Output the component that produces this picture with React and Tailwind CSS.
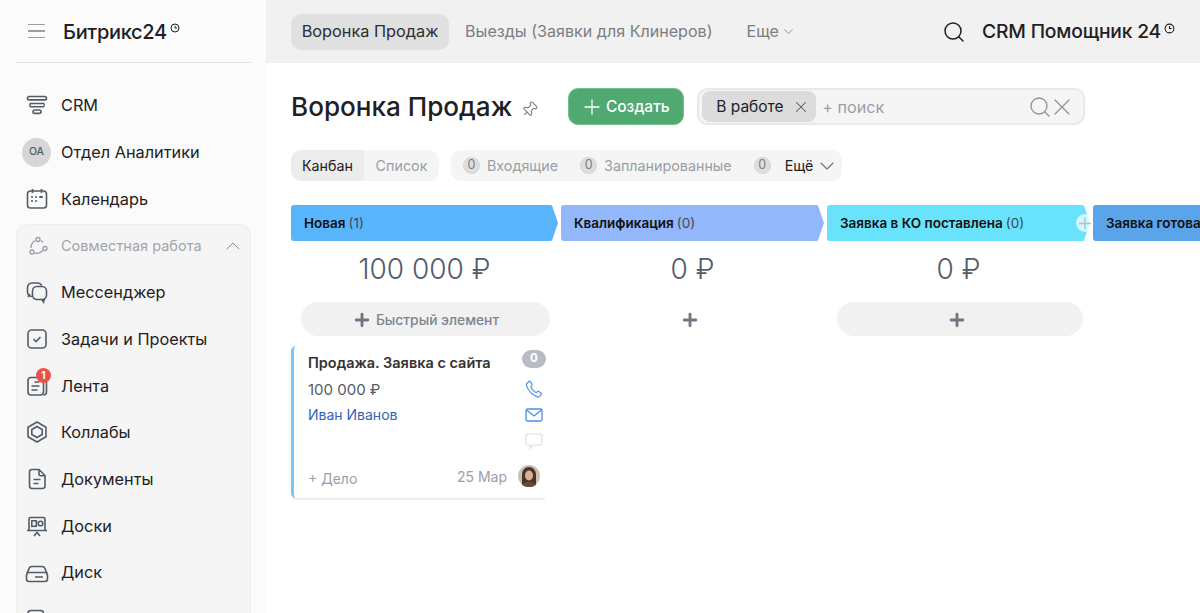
import React from "react";
import { ChevronDown, ChevronUp, Plus, Search, X, Pin } from "lucide-react";

const Clock = ({ className }) => (
  <svg viewBox="0 0 10 10" fill="none" stroke="currentColor" strokeWidth="1" className={className}>
    <circle cx="5" cy="5" r="4" />
    <path d="M5 2.8V5h2" />
  </svg>
);

const icon = "w-6 h-6 text-[#525c69] shrink-0";
const svgProps = { viewBox: "0 0 24 24", fill: "none", stroke: "currentColor", strokeWidth: 1.6, className: icon };

const FunnelIcon = () => (
  <svg {...svgProps}>
    <rect x="2.5" y="3.5" width="19" height="3.4" rx="1.7" />
    <path d="M5.5 10.5h13c.8 0 .8 3.2 0 3.2h-13c-.8 0-.8-3.2 0-3.2z" />
    <rect x="8" y="17" width="8" height="3.4" rx="1.7" />
  </svg>
);
const CalendarIcon = () => (
  <svg {...svgProps}>
    <rect x="2.5" y="4" width="19" height="17" rx="3" />
    <path d="M7.5 2v4M16.5 2v4" />
    <path d="M7 10h.01M11 10h.01M15 10h2M7 14h.01M11 14h.01" strokeWidth="2" strokeLinecap="round" />
  </svg>
);
const CollabIcon = () => (
  <svg viewBox="0 0 24 24" fill="none" stroke="#9a9ea5" strokeWidth="1.3" className="w-6 h-6 shrink-0">
    <circle cx="12" cy="5.5" r="2" />
    <circle cx="6" cy="18" r="2" />
    <circle cx="19" cy="14.5" r="2" />
    <path d="M9 6.500c-2.500 1.500-4 4-4 7.500M8.500 19c3 .8 6 0 8.500-2.500M15 6.500c.8.500 1.500 1.200 2 2" />
  </svg>
);
const ChatIcon = () => (
  <svg {...svgProps}>
    <path d="M7 16.500c-2.800 0-4.500-1.800-4.500-4.500V8c0-3 2-5 5-5h5c2 0 3.500 1 4.200 2.500" />
    <path d="M5 14l-2 3" />
    <rect x="7.500" y="6.500" width="14" height="13" rx="4.500" />
    <path d="M17 19.500l1.500 2.500 1-3" />
  </svg>
);
const TaskIcon = () => (
  <svg {...svgProps}>
    <rect x="3" y="3" width="18" height="18" rx="3.500" />
    <path d="M8.500 12l2.500 2.500 4.500-4.500" />
  </svg>
);
const FeedIcon = () => (
  <svg {...svgProps}>
    <rect x="3" y="3.500" width="15.500" height="17.500" rx="3" />
    <path d="M18.500 7h1.200c1 0 1.800.8 1.800 1.800V18c0 1.700-1.300 3-3 3" />
    <path d="M6.500 8h.01M9.500 8h5M6.500 12h8M6.500 16h6" />
  </svg>
);
const HexIcon = () => (
  <svg {...svgProps}>
    <path d="M12 2l9 5.200v9.600L12 22l-9-5.200V7.200z" />
    <path d="M12 6.500l5.200 3v5L12 17.500l-5.200-3v-5z" />
  </svg>
);
const DocIcon = () => (
  <svg {...svgProps}>
    <path d="M7 2.500h7l6 6V19c0 1.500-1 2.500-2.500 2.500h-10.500C5.500 21.500 4.500 20.500 4.500 19V5c0-1.500 1-2.500 2.500-2.500z" />
    <path d="M14 2.500V7c0 1 .8 1.700 1.700 1.700H20M8.500 12.500h7M8.500 16.500h5" />
  </svg>
);
const BoardIcon = () => (
  <svg {...svgProps}>
    <path d="M4 16V5c0-1 .7-1.500 1.500-1.500h13c.8 0 1.500.5 1.500 1.500v11" />
    <path d="M2 16.500h20M9 22l3-3.500 3 3.500" />
    <rect x="6.800" y="6.800" width="4.500" height="5.500" />
    <circle cx="15.500" cy="9.500" r="2.300" />
  </svg>
);
const DiskIcon = () => (
  <svg {...svgProps}>
    <path d="M1.500 14.500l2.500-7c.5-1.200 1.300-2 2.800-2h10.400c1.500 0 2.300.8 2.800 2l2.500 7v3.500c0 1.500-1 2.500-2.500 2.500H4c-1.500 0-2.500-1-2.500-2.500z" />
    <path d="M1.500 11.500h21M5.500 16h.01M10 16h8" />
  </svg>
);

const Item = ({ Icon, label, badge }) => (
  <div className="h-[46.700px] flex items-center pl-[11px] gap-[12px] text-[16.300px] text-[#1e2023]">
    <div className="relative w-6 flex justify-center shrink-0">
      <Icon />
      {badge && (
        <span className="absolute -top-[6px] left-[11px] w-[15px] h-[15px] rounded-full bg-[#e5534b] text-white text-[10px] font-bold flex items-center justify-center">
          {badge}
        </span>
      )}
    </div>
    {label}
  </div>
);

const Sidebar = () => (
  <aside className="w-[266px] shrink-0 bg-[#fbfbfb] pl-[16px] pr-[15px] overflow-hidden">
    <div className="h-[63px] border-b border-[#e3e3e3] flex items-center">
      <div className="w-[47px] pl-[12px] flex flex-col gap-[5px]">
        <span className="h-[1.500px] w-[17px] bg-[#9a9ea5]" />
        <span className="h-[1.500px] w-[17px] bg-[#9a9ea5]" />
        <span className="h-[1.500px] w-[17px] bg-[#9a9ea5]" />
      </div>
      <span className="pt-[2px] text-[20px] font-medium text-[#1e2023] tracking-[-0.3px]">Битрикс24</span>
      <Clock className="w-[10px] h-[10px] ml-[3px] mb-[6px] text-[#1e2023]" />
    </div>
    <div className="pt-[19px]">
      <div className="-mx-[2px]">
        <Item Icon={FunnelIcon} label="CRM" />
        <div className="h-[46.700px] flex items-center pl-[8px] gap-[10px] text-[16.300px] text-[#1e2023]">
          <span className="w-[29px] h-[29px] rounded-full bg-[#d6d6d6] text-[#525c69] text-[10.500px] font-medium flex items-center justify-center">
            OA
          </span>
          Отдел Аналитики
        </div>
        <Item Icon={CalendarIcon} label="Календарь" />
      </div>
    </div>
    <div className="mt-[2px] bg-[#f5f5f5] rounded-t-[12px] border border-b-0 border-[#efefef] h-[400px]">
      <div className="h-[44px] pb-[2px] flex items-center pl-[9px] pr-[5px] gap-[11px] text-[14.500px] text-[#a3a6ab]">
        <CollabIcon />
        <span className="flex-1">Совместная работа</span>
        <ChevronUp className="w-[24px] h-[24px] text-[#8c9096]" strokeWidth={1} />
      </div>
      <div className="-ml-[3px]">
        <Item Icon={ChatIcon} label="Мессенджер" />
        <Item Icon={TaskIcon} label="Задачи и Проекты" />
        <Item Icon={FeedIcon} label="Лента" badge="1" />
        <Item Icon={HexIcon} label="Коллабы" />
        <Item Icon={DocIcon} label="Документы" />
        <Item Icon={BoardIcon} label="Доски" />
        <Item Icon={DiskIcon} label="Диск" />
        <Item Icon={FeedIcon} label="" />
      </div>
    </div>
  </aside>
);

const TopBar = () => (
  <header className="h-[63px] bg-[#f1f1f1] flex items-center pl-[25px] pr-[25px] text-[16.100px]">
    <div className="h-[36px] w-[158px] rounded-[10px] bg-[#e0e0e0] text-[#2a2d31] text-[16.300px] flex items-center justify-center">
      Воронка Продаж
    </div>
    <div className="ml-[16px] text-[#7b7e83]">Выезды (Заявки для Клинеров)</div>
    <div className="ml-[34px] text-[#7b7e83] flex items-center gap-[2px]">
      Еще <ChevronDown className="w-[15px] h-[15px]" strokeWidth={1.300} />
    </div>
    <div className="ml-auto flex items-center">
      <Search className="w-[24px] h-[24px] text-[#1e2023]" strokeWidth={1.500} />
      <span className="ml-[16px] text-[19.300px] font-medium text-[#1e2023] tracking-[-0.2px] whitespace-nowrap">CRM Помощник 24</span>
      <Clock className="w-[11px] h-[11px] ml-[3px] mb-[6px] text-[#1e2023]" />
    </div>
  </header>
);

const TitleRow = () => (
  <div className="pt-[25px] flex items-center h-[62px]">
    <h1 className="text-[26.100px] font-medium text-[#1e2023] whitespace-nowrap leading-[37px]">Воронка Продаж</h1>
    <Pin className="w-[17px] h-[17px] ml-[9px] mt-[5px] text-[#737980] rotate-45" strokeWidth={1.500} />
    <button className="ml-[30px] w-[116px] h-[37px] rounded-[10px] bg-[#50a970] border border-[#6fc08c] text-white text-[15.500px] font-medium flex items-center justify-center gap-[2px]">
      <Plus className="w-[24px] h-[24px] -ml-[3px]" strokeWidth={1.300} />
      Создать
    </button>
    <div className="ml-[13px] w-[388px] h-[37px] rounded-[10px] bg-[#f5f5f5] border-2 border-[#e9e9e9] flex items-center pl-[3px] pr-[7px]">
      <div className="h-[31px] w-[114px] rounded-[8px] bg-[#dcdcdc] text-[15.500px] text-[#1e2023] flex items-center pl-[14px] gap-[8px]">
        В работе
        <X className="w-[18px] h-[18px] text-[#525c69]" strokeWidth={1.400} />
      </div>
      <span className="ml-[6px] pt-[1px] text-[16.200px] text-[#9a9ea5]">+ поиск</span>
      <Search className="ml-auto w-[24px] h-[24px] text-[#8c9096]" strokeWidth={1.300} />
      <X className="-ml-[4px] w-[28px] h-[28px] text-[#8c9096]" strokeWidth={1} />
    </div>
  </div>
);

const Count = () => (
  <span className="w-[17px] h-[17px] rounded-full bg-[#dedede] border border-[#d4d4d4] text-[12.500px] text-[#7b7e83] flex items-center justify-center shrink-0">
    0
  </span>
);

const FilterRow = () => (
  <div className="mt-[25px] flex items-center gap-[12px] text-[14.300px] h-[31px]">
    <div className="h-full w-[148px] rounded-[10px] bg-[#f5f5f5] flex overflow-hidden">
      <div className="w-[73px] bg-[#ececec] text-[#1e2023] flex items-center justify-center">Канбан</div>
      <div className="flex-1 text-[#9a9ea5] flex items-center justify-center">Список</div>
    </div>
    <div className="h-full w-[391px] rounded-[10px] bg-[#f5f5f5] flex items-center pl-[12px] text-[#9a9ea5]">
      <Count />
      <span className="ml-[7px]">Входящие</span>
      <span className="ml-[22px]"><Count /></span>
      <span className="ml-[7px]">Запланированные</span>
      <span className="ml-[22px]"><Count /></span>
      <span className="ml-[14px] text-[#1e2023]">Ещё</span>
      <ChevronDown className="ml-[2px] w-[24px] h-[24px] text-[#6f7379]" strokeWidth={1.100} />
    </div>
  </div>
);

const Stage = ({ width, color, name, count, sum, add, addBg, addWidth, plusCircle, tip }) => (
  <div className="shrink-0" style={{ width }}>
    <div className={`relative flex h-[36px] ${tip ? "pr-[3px]" : ""}`}>
      <div className="flex-1 min-w-0 rounded-l-[3px] flex items-center pl-[13px] pt-[1px] text-[13.500px] whitespace-nowrap overflow-hidden" style={{ backgroundColor: color }}>
        <span className="font-semibold text-[#111]">{name}</span>
        {count && <span className="ml-[3px] text-[#3d4854]">{count}</span>}
      </div>
      {tip && (
        <svg viewBox="0 0 9 36" className="w-[9px] h-[36px] shrink-0 -ml-px" style={{ fill: color }}>
          <path d="M0 0h1.500c.8 0 1.300.3 1.700 1L9 18 3.200 35c-.4.700-.9 1-1.700 1H0z" />
        </svg>
      )}
      {plusCircle && (
        <span className="absolute right-[-1px] top-[9px] w-[18px] h-[18px] rounded-full bg-white/70 flex items-center justify-center">
          <Plus className="w-[19px] h-[19px] text-[#a9c4cc]" strokeWidth={2} />
        </span>
      )}
    </div>
    {sum && (
      <div className="mt-[10px] h-[36px] flex items-center justify-center text-[28px] font-light text-[#535c69] pr-[3px] whitespace-nowrap">
        {sum}
      </div>
    )}
    {sum && (
      <div
        className={`mt-[15px] ml-[10px] pt-[2px] h-[34px] rounded-full flex items-center justify-center gap-[4px] text-[13.800px] font-medium text-[#7b8591] ${addBg ? "bg-[#f1f1f1]" : ""} ${plusCircle ? "pr-[6px]" : ""}`}
        style={{ width: addWidth }}
      >
        <Plus className="w-[20px] h-[20px] text-[#6f7882]" strokeWidth={3.400} />
        {add}
      </div>
    )}
  </div>
);

// photo of the assignee, drawn roughly
const Avatar = () => (
  <svg viewBox="0 0 22 22" className="w-[22px] h-[22px] rounded-full shrink-0">
    <rect width="22" height="22" fill="#c9c2b4" />
    <path d="M4 22V10c0-5 3-8 7-8s7 3 7 8v12z" fill="#4d3325" />
    <ellipse cx="11" cy="10.500" rx="4" ry="5" fill="#d9b199" />
    <path d="M3 22c1-4 4-5 8-5s7 1 8 5z" fill="#6a4a3a" />
  </svg>
);

const DealCard = () => (
  <div className="mt-[10px] w-[254px] h-[152px] rounded-l-[5px] border-l-[3px] border-[#7cc5fa] bg-white shadow-[0_2px_0_#eceef0] relative">
    <div className="flex h-full">
      <div className="flex-1 pl-[14px] pt-[8px] flex flex-col">
        <div className="text-[14.500px] leading-[18px] font-semibold text-[#333] whitespace-nowrap">Продажа. Заявка с сайта</div>
        <div className="mt-[9px] text-[15px] leading-[18px] text-[#535c69] whitespace-nowrap">100 000 ₽</div>
        <div className="mt-[7px] text-[14px] leading-[18px] text-[#2f66b5] whitespace-nowrap">Иван Иванов</div>
        <div className="mt-auto mb-[8px] flex items-center text-[14px] text-[#9a9ea5] pr-[15px]">
          <span>+ Дело</span>
          <span className="ml-auto pb-[3px]">25 Мар</span>
        </div>
      </div>
      <div className="w-[24px] -mr-[1px] pt-[4px] flex flex-col items-center shrink-0">
        <span className="w-[24px] h-[18px] rounded-full bg-[#b8bcc3] text-white text-[11.500px] font-bold flex items-center justify-center">0</span>
        <svg viewBox="0 0 18 18" fill="none" stroke="#4f8fe6" strokeWidth="1.200" className="mt-[12px] w-[18px] h-[18px]">
          <path d="M2 3.200L4 1.500c.5-.4 1-.3 1.400.2l1.600 2.500c.3.500.2 1-.2 1.400l-1 1c.8 2.500 2.800 4.800 5.500 6l1.200-1c.4-.3.900-.3 1.300 0l2.300 1.700c.5.400.5 1 .1 1.400l-1.500 1.700c-.6.600-1.500.8-2.400.5C7.500 14.800 3.200 10.500 1.500 5.600c-.2-.9 0-1.800.5-2.400z" />
        </svg>
        <svg viewBox="0 0 18 14" fill="none" stroke="#4f8fe6" strokeWidth="1.300" className="mt-[10px] w-[18px] h-[14px]">
          <rect x="1" y="1" width="16" height="12" rx="1.500" />
          <path d="M1.500 2l7.500 6 7.500-6" />
        </svg>
        <svg viewBox="0 0 18 17" fill="none" stroke="#dcdfe2" strokeWidth="1.200" className="mt-[11px] w-[18px] h-[17px]">
          <path d="M2.500 1h13c.8 0 1.500.7 1.500 1.500v8c0 .8-.7 1.500-1.500 1.500H8l-3 3.500V12H2.500C1.700 12 1 11.300 1 10.500v-8C1 1.700 1.700 1 2.500 1z" />
        </svg>
        <div className="mt-[15px] self-start -ml-[4px]"><Avatar /></div>
      </div>
    </div>
  </div>
);

const Board = () => (
  <div className="mt-[24px] relative">
    <div className="flex">
      <Stage width={270} color="#58b5fc" name="Новая" count="(1)" sum="100 000 ₽" add="Быстрый элемент" addBg addWidth={249} tip />
      <Stage width={266} color="#92b7fa" name="Квалификация" count="(0)" sum="0 ₽" addWidth={238} tip />
      <Stage width={266} color="#69e3fb" name="Заявка в КО поставлена" count="(0)" sum="0 ₽" addBg addWidth={246} tip plusCircle />
      <Stage width={120} color="#5aa4ea" name="Заявка готова" />
    </div>
    <DealCard />
  </div>
);

const App = () => (
  <div className="w-[1200px] h-[613px] flex overflow-hidden bg-white font-['Inter',sans-serif]">
    <Sidebar />
    <main className="flex-1 min-w-0 overflow-hidden">
      <TopBar />
      <div className="pl-[25px]">
        <TitleRow />
        <FilterRow />
        <Board />
      </div>
    </main>
  </div>
);

export default App;
